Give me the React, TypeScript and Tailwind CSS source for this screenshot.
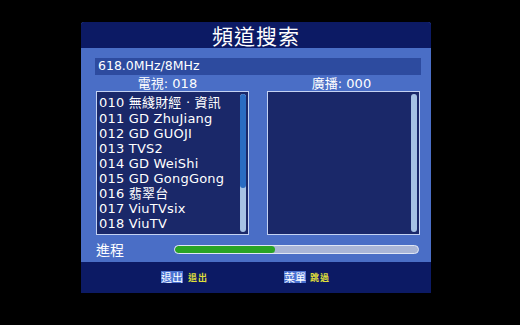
import React from "react";

const latin = "font-['DejaVu_Sans','Noto_Sans_CJK_TC',sans-serif]";

const rows = [
  "010 無綫財經 · 資訊",
  "011 GD ZhuJiang",
  "012 GD GUOJI",
  "013 TVS2",
  "014 GD WeiShi",
  "015 GD GongGong",
  "016 翡翠台",
  "017 ViuTVsix",
  "018 ViuTV",
];

export default function App() {
  return (
    <div className={`w-[520px] h-[325px] bg-black pl-[81px] pt-[22px] ${latin}`}>
      <div className="w-[350px] h-[271px] flex flex-col rounded-t-[3px] bg-[#4a6ec6]">
        {/* header */}
        <div className="h-[26px] bg-[#0c1a64] rounded-t-[3px] flex items-center justify-center">
          <span className="text-white text-[21px] leading-[26px] font-['Noto_Sans_CJK_TC',sans-serif] tracking-[1px]">
            頻道搜索
          </span>
        </div>
        {/* body */}
        <div className="flex-1 flex flex-col pt-[10px]">
          <div className="ml-[14px] w-[326px] h-[17px] bg-[#2d4b9f] flex items-center pl-[3px]">
            <span className="text-white text-[12.5px] leading-none">618.0MHz/8MHz</span>
          </div>
          <div className="h-[16px] flex ml-[15px] gap-[18px] text-white text-[13px] leading-none items-center">
            <div className="w-[153px] flex justify-center pr-[10px]">電視: 018</div>
            <div className="w-[153px] flex justify-center pr-[4px]">廣播: 000</div>
          </div>
          <div className="flex ml-[15px] gap-[18px]">
            <div className="w-[153px] h-[144px] border border-[#c4d2f2] bg-[#1a2869] flex">
              <div className="flex-1 flex flex-col pt-[2px] pl-[2px]">
                {rows.map((r, i) => (
                  <div
                    key={r}
                    className={`${i === 0 ? "h-[17px]" : "h-[15px]"} flex items-center text-white text-[13px] leading-none whitespace-nowrap tracking-[0.2px]`}
                  >
                    {r}
                  </div>
                ))}
              </div>
              <div className="w-[6px] mr-[2px] mt-[2px] mb-[2px] rounded-full bg-[#a6c2e4] flex flex-col overflow-hidden">
                <div className="h-[94px] bg-[#2a6cc2] rounded-full" />
              </div>
            </div>
            <div className="w-[153px] h-[144px] border border-[#c4d2f2] bg-[#1a2869] flex justify-end">
              <div className="w-[6px] mr-[2px] mt-[2px] mb-[2px] rounded-full bg-[#a6c2e4]" />
            </div>
          </div>
          <div className="flex items-center ml-[15px] h-[27px]">
            <span className="text-white text-[14px] leading-none font-['Noto_Sans_CJK_TC',sans-serif] w-[78px]">進程</span>
            <div className="w-[245px] h-[9px] mt-[1px] rounded-full bg-[#a9b5d6] border border-[#dfe6f5] flex overflow-hidden">
              <div className="w-[100px] h-full bg-[#2aa424] rounded-full" />
            </div>
          </div>
        </div>
        {/* footer */}
        <div className="h-[31px] bg-[#0c1a64] flex items-start pt-[9px] pl-[80px]">
          <div className="flex items-center">
            <span className="w-[22px] h-[12px] bg-[#4a72d2] text-white text-[11px] leading-none flex items-center justify-center font-['Noto_Sans_CJK_TC',sans-serif]">
              退出
            </span>
            <span className="ml-[5px] text-[#dede3a] text-[9px] leading-none font-bold tracking-[1px] font-['Noto_Sans_CJK_TC',sans-serif]">
              退出
            </span>
          </div>
          <div className="flex items-center ml-[76px]">
            <span className="w-[22px] h-[12px] bg-[#4a72d2] text-white text-[11px] leading-none flex items-center justify-center font-['Noto_Sans_CJK_TC',sans-serif]">
              菜單
            </span>
            <span className="ml-[4px] text-[#dede3a] text-[9px] leading-none font-bold tracking-[1px] font-['Noto_Sans_CJK_TC',sans-serif]">
              跳過
            </span>
          </div>
        </div>
      </div>
    </div>
  );
}
